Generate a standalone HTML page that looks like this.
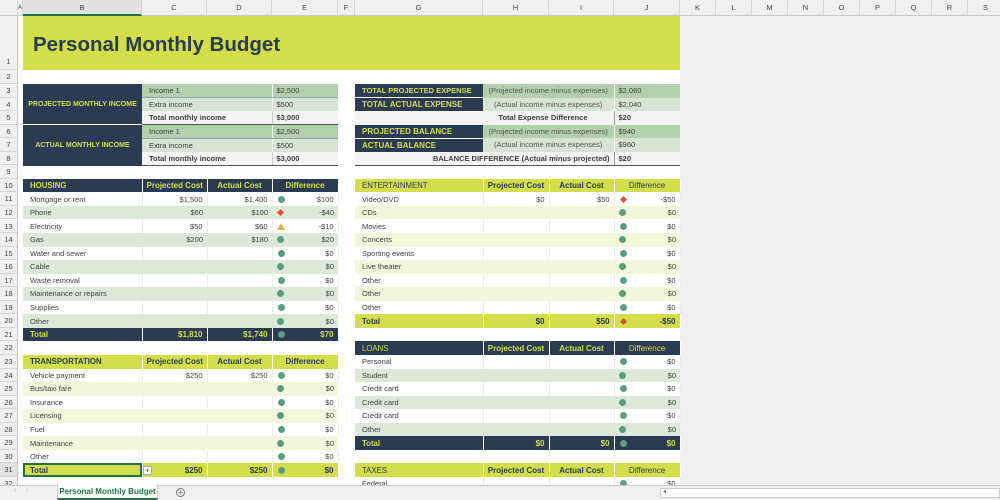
<!DOCTYPE html>
<html><head><meta charset="utf-8"><style>
*{margin:0;padding:0;box-sizing:border-box}
body{width:1000px;height:500px;overflow:hidden;background:#fff;font-family:"Liberation Sans",Arial,sans-serif;font-size:7.5px;color:#404040;position:relative}
.abs{position:absolute}
.colh{position:absolute;top:0;height:16px;background:#f0f0f0;border-right:1px solid #d4d4d4;border-bottom:1px solid #c8c8c8;text-align:center;line-height:16px;font-size:7.5px;color:#444}
.rown{position:absolute;left:0;width:18px;background:#f0f0f0;border-bottom:1px solid #d4d4d4;border-right:1px solid #c8c8c8;text-align:center;font-size:7.5px;color:#444}
table{position:absolute;border-collapse:collapse;table-layout:fixed}
td{height:13.55px;padding:0 4px;white-space:nowrap;overflow:hidden;line-height:13px}
td:first-child{padding-left:7px}
.r{text-align:right}.c{text-align:center}.b{font-weight:bold}
.nv{background:#2b3c52;color:#d3df4a}
.lm{background:#d3df4a;color:#2b3c52}
.hd td{font-weight:bold;font-size:8px;border-right:1px solid #fff}
.hd td:first-child{font-size:7.8px}
.g1{background:#b3cfae}.g2{background:#d5e5d1}.wt{background:#f4f4f4}
.ha{background:#dce9d6}.ta{background:#f2f7dc}
.w td{border-right:1px solid #ececec}
.dot{display:inline-block;width:7px;height:7px;border-radius:50%;background:#5c9d80;float:left;margin-top:3px;margin-left:1px}
.dia{display:inline-block;width:5px;height:5px;background:#d9542b;transform:rotate(45deg);float:left;margin-top:4px;margin-left:2px}
.tri{float:left;margin-top:3px;width:0;height:0;border-left:4px solid transparent;border-right:4px solid transparent;border-bottom:7px solid #e8b04a}
.lbl{text-align:center;font-size:7px;padding:0 2px!important}
</style></head><body>
<div class="abs" style="left:680px;top:16px;width:320px;height:470px;background:#f0f0f0"></div>
<div class="colh" style="left:0;width:18px"></div>
<div class="colh" style="left:18px;width:5px;font-size:6px">A</div>
<div class="colh" style="left:23px;width:119px;background:#e2e2e2;border-bottom:2px solid #217346">B</div>
<div class="colh" style="left:142px;width:65px">C</div>
<div class="colh" style="left:207px;width:65px">D</div>
<div class="colh" style="left:272px;width:66px">E</div>
<div class="colh" style="left:338px;width:17px">F</div>
<div class="colh" style="left:355px;width:128px">G</div>
<div class="colh" style="left:483px;width:66px">H</div>
<div class="colh" style="left:549px;width:65px">I</div>
<div class="colh" style="left:614px;width:66px">J</div>
<div class="colh" style="left:680px;width:36px">K</div>
<div class="colh" style="left:716px;width:36px">L</div>
<div class="colh" style="left:752px;width:36px">M</div>
<div class="colh" style="left:788px;width:36px">N</div>
<div class="colh" style="left:824px;width:36px">O</div>
<div class="colh" style="left:860px;width:36px">P</div>
<div class="colh" style="left:896px;width:36px">Q</div>
<div class="colh" style="left:932px;width:36px">R</div>
<div class="colh" style="left:968px;width:36px">S</div>
<div class="rown" style="top:16px;height:54px;line-height:92px">1</div>
<div class="rown" style="top:70px;height:14px;line-height:14px">2</div>
<div class="rown" style="top:84px;height:13.55px;line-height:13.55px">3</div>
<div class="rown" style="top:97.55px;height:13.55px;line-height:13.55px">4</div>
<div class="rown" style="top:111.1px;height:13.55px;line-height:13.55px">5</div>
<div class="rown" style="top:124.65px;height:13.55px;line-height:13.55px">6</div>
<div class="rown" style="top:138.2px;height:13.55px;line-height:13.55px">7</div>
<div class="rown" style="top:151.75px;height:13.55px;line-height:13.55px">8</div>
<div class="rown" style="top:165.3px;height:13.55px;line-height:13.55px">9</div>
<div class="rown" style="top:178.85px;height:13.55px;line-height:13.55px">10</div>
<div class="rown" style="top:192.4px;height:13.55px;line-height:13.55px">11</div>
<div class="rown" style="top:205.95px;height:13.55px;line-height:13.55px">12</div>
<div class="rown" style="top:219.5px;height:13.55px;line-height:13.55px">13</div>
<div class="rown" style="top:233.05px;height:13.55px;line-height:13.55px">14</div>
<div class="rown" style="top:246.6px;height:13.55px;line-height:13.55px">15</div>
<div class="rown" style="top:260.15px;height:13.55px;line-height:13.55px">16</div>
<div class="rown" style="top:273.7px;height:13.55px;line-height:13.55px">17</div>
<div class="rown" style="top:287.25px;height:13.55px;line-height:13.55px">18</div>
<div class="rown" style="top:300.8px;height:13.55px;line-height:13.55px">19</div>
<div class="rown" style="top:314.35px;height:13.55px;line-height:13.55px">20</div>
<div class="rown" style="top:327.9px;height:13.55px;line-height:13.55px">21</div>
<div class="rown" style="top:341.45px;height:13.55px;line-height:13.55px">22</div>
<div class="rown" style="top:355px;height:13.55px;line-height:13.55px">23</div>
<div class="rown" style="top:368.55px;height:13.55px;line-height:13.55px">24</div>
<div class="rown" style="top:382.1px;height:13.55px;line-height:13.55px">25</div>
<div class="rown" style="top:395.65px;height:13.55px;line-height:13.55px">26</div>
<div class="rown" style="top:409.2px;height:13.55px;line-height:13.55px">27</div>
<div class="rown" style="top:422.75px;height:13.55px;line-height:13.55px">28</div>
<div class="rown" style="top:436.3px;height:13.55px;line-height:13.55px">29</div>
<div class="rown" style="top:449.85px;height:13.55px;line-height:13.55px">30</div>
<div class="rown" style="top:463.4px;height:13.55px;line-height:13.55px;background:#e2e2e2">31</div>
<div class="rown" style="top:476.95px;height:13.55px;line-height:13.55px">32</div>

<div class="abs" style="left:23px;top:16px;width:657px;height:54px;background:#d3df4a"></div>
<div class="abs" style="left:33px;top:33px;font-size:20.5px;font-weight:bold;color:#2b3c52">Personal Monthly Budget</div>

<table style="left:23px;top:84px;width:315px">
<colgroup><col style="width:119px"><col style="width:130px"><col style="width:66px"></colgroup>
<tr><td rowspan="3" class="nv b lbl" style="border-bottom:1px solid #fff">PROJECTED MONTHLY INCOME</td><td class="g1" style="border-bottom:1px solid #8aa;border-right:1px solid #fff;padding-left:7px">Income 1</td><td class="g1" style="border-bottom:1px solid #8aa">$2,500</td></tr>
<tr><td class="g2" style="border-right:1px solid #fff;padding-left:7px">Extra income</td><td class="g2">$500</td></tr>
<tr><td class="wt b" style="border-right:1px solid #ccc;border-bottom:1px solid #555;padding-left:7px">Total monthly income</td><td class="wt b" style="border-bottom:1px solid #555">$3,000</td></tr>
<tr><td rowspan="3" class="nv b lbl">ACTUAL MONTHLY INCOME</td><td class="g1" style="border-bottom:1px solid #8aa;border-right:1px solid #fff;padding-left:7px">Income 1</td><td class="g1" style="border-bottom:1px solid #8aa">$2,500</td></tr>
<tr><td class="g2" style="border-right:1px solid #fff;padding-left:7px">Extra income</td><td class="g2">$500</td></tr>
<tr><td class="wt b" style="border-right:1px solid #ccc;border-bottom:1px solid #555;padding-left:7px">Total monthly income</td><td class="wt b" style="border-bottom:1px solid #555">$3,000</td></tr>
</table>

<table style="left:355px;top:84px;width:325px">
<colgroup><col style="width:128px"><col style="width:131px"><col style="width:66px"></colgroup>
<tr><td class="nv b" style="border-bottom:1px solid #fff">TOTAL PROJECTED EXPENSE</td><td class="g1 c" style="color:#555;border-right:1px solid #fff">(Projected income minus expenses)</td><td class="g1">$2,060</td></tr>
<tr><td class="nv b" style="font-size:8px">TOTAL ACTUAL EXPENSE</td><td class="g2 c" style="color:#555;border-right:1px solid #fff">(Actual income minus expenses)</td><td class="g2">$2,040</td></tr>
<tr><td colspan="2" class="wt b" style="text-align:right;padding-right:26px;border-right:1px solid #999">Total Expense Difference</td><td class="wt b">$20</td></tr>
<tr><td class="nv b" style="font-size:8px;border-bottom:1px solid #fff">PROJECTED BALANCE</td><td class="g1 c" style="color:#555;border-right:1px solid #fff">(Projected income minus expenses)</td><td class="g1">$940</td></tr>
<tr><td class="nv b" style="font-size:8px">ACTUAL BALANCE</td><td class="g2 c" style="color:#555;border-right:1px solid #fff">(Actual income minus expenses)</td><td class="g2">$960</td></tr>
<tr><td colspan="2" class="wt b" style="text-align:right;border-right:1px solid #999;border-bottom:1px solid #555">BALANCE DIFFERENCE (Actual minus projected)</td><td class="wt b" style="border-bottom:1px solid #555">$20</td></tr>
</table>

<table style="left:23px;top:178.85px;width:315px">
<colgroup><col style="width:119px"><col style="width:65px"><col style="width:65px"><col style="width:66px"></colgroup>
<tr class="hd nv"><td>HOUSING</td><td class="c">Projected Cost</td><td class="c">Actual Cost</td><td class="c">Difference</td></tr>
<tr class="w"><td>Mortgage or rent</td><td class="r">$1,500</td><td class="r">$1,400</td><td class="r"><span class="dot"></span>$100</td></tr>
<tr class="ha"><td>Phone</td><td class="r">$60</td><td class="r">$100</td><td class="r"><span class="dia"></span>-$40</td></tr>
<tr class="w"><td>Electricity</td><td class="r">$50</td><td class="r">$60</td><td class="r"><span class="tri"></span>-$10</td></tr>
<tr class="ha"><td>Gas</td><td class="r">$200</td><td class="r">$180</td><td class="r"><span class="dot"></span>$20</td></tr>
<tr class="w"><td>Water and sewer</td><td></td><td></td><td class="r"><span class="dot"></span>$0</td></tr>
<tr class="ha"><td>Cable</td><td></td><td></td><td class="r"><span class="dot"></span>$0</td></tr>
<tr class="w"><td>Waste removal</td><td></td><td></td><td class="r"><span class="dot"></span>$0</td></tr>
<tr class="ha"><td>Maintenance or repairs</td><td></td><td></td><td class="r"><span class="dot"></span>$0</td></tr>
<tr class="w"><td>Supplies</td><td></td><td></td><td class="r"><span class="dot"></span>$0</td></tr>
<tr class="ha"><td>Other</td><td></td><td></td><td class="r"><span class="dot"></span>$0</td></tr>
<tr class="hd nv"><td>Total</td><td class="r">$1,810</td><td class="r">$1,740</td><td class="r"><span class="dot"></span>$70</td></tr>
</table>

<table style="left:355px;top:178.85px;width:325px">
<colgroup><col style="width:128px"><col style="width:66px"><col style="width:65px"><col style="width:66px"></colgroup>
<tr class="hd lm"><td style="font-weight:normal">ENTERTAINMENT</td><td class="c">Projected Cost</td><td class="c">Actual Cost</td><td class="c" style="font-weight:normal">Difference</td></tr>
<tr class="w"><td>Video/DVD</td><td class="r">$0</td><td class="r">$50</td><td class="r"><span class="dia"></span>-$50</td></tr>
<tr class="ta"><td>CDs</td><td></td><td></td><td class="r"><span class="dot"></span>$0</td></tr>
<tr class="w"><td>Movies</td><td></td><td></td><td class="r"><span class="dot"></span>$0</td></tr>
<tr class="ta"><td>Concerts</td><td></td><td></td><td class="r"><span class="dot"></span>$0</td></tr>
<tr class="w"><td>Sporting events</td><td></td><td></td><td class="r"><span class="dot"></span>$0</td></tr>
<tr class="ta"><td>Live theater</td><td></td><td></td><td class="r"><span class="dot"></span>$0</td></tr>
<tr class="w"><td>Other</td><td></td><td></td><td class="r"><span class="dot"></span>$0</td></tr>
<tr class="ta"><td>Other</td><td></td><td></td><td class="r"><span class="dot"></span>$0</td></tr>
<tr class="w"><td>Other</td><td></td><td></td><td class="r"><span class="dot"></span>$0</td></tr>
<tr class="hd lm"><td>Total</td><td class="r">$0</td><td class="r">$50</td><td class="r"><span class="dia"></span>-$50</td></tr>
</table>

<table style="left:23px;top:355px;width:315px">
<colgroup><col style="width:119px"><col style="width:65px"><col style="width:65px"><col style="width:66px"></colgroup>
<tr class="hd lm"><td>TRANSPORTATION</td><td class="c">Projected Cost</td><td class="c">Actual Cost</td><td class="c">Difference</td></tr>
<tr class="w"><td>Vehicle payment</td><td class="r">$250</td><td class="r">$250</td><td class="r"><span class="dot"></span>$0</td></tr>
<tr class="ta"><td>Bus/taxi fare</td><td></td><td></td><td class="r"><span class="dot"></span>$0</td></tr>
<tr class="w"><td>Insurance</td><td></td><td></td><td class="r"><span class="dot"></span>$0</td></tr>
<tr class="ta"><td>Licensing</td><td></td><td></td><td class="r"><span class="dot"></span>$0</td></tr>
<tr class="w"><td>Fuel</td><td></td><td></td><td class="r"><span class="dot"></span>$0</td></tr>
<tr class="ta"><td>Maintenance</td><td></td><td></td><td class="r"><span class="dot"></span>$0</td></tr>
<tr class="w"><td>Other</td><td></td><td></td><td class="r"><span class="dot"></span>$0</td></tr>
<tr class="hd lm"><td style="outline:2px solid #217346;outline-offset:-2px">Total</td><td class="r">$250</td><td class="r">$250</td><td class="r"><span class="dot"></span>$0</td></tr>
</table>
<div class="abs" style="left:143px;top:466px;width:9px;height:9px;background:#fff;border:1px solid #aaa;font-size:5px;text-align:center;line-height:8px;color:#666">▼</div>

<table style="left:355px;top:341.45px;width:325px">
<colgroup><col style="width:128px"><col style="width:66px"><col style="width:65px"><col style="width:66px"></colgroup>
<tr class="hd nv"><td style="font-weight:normal">LOANS</td><td class="c">Projected Cost</td><td class="c">Actual Cost</td><td class="c" style="font-weight:normal">Difference</td></tr>
<tr class="w"><td>Personal</td><td></td><td></td><td class="r"><span class="dot"></span>$0</td></tr>
<tr class="ha"><td>Student</td><td></td><td></td><td class="r"><span class="dot"></span>$0</td></tr>
<tr class="w"><td>Credit card</td><td></td><td></td><td class="r"><span class="dot"></span>$0</td></tr>
<tr class="ha"><td>Credit card</td><td></td><td></td><td class="r"><span class="dot"></span>$0</td></tr>
<tr class="w"><td>Credit card</td><td></td><td></td><td class="r"><span class="dot"></span>$0</td></tr>
<tr class="ha"><td>Other</td><td></td><td></td><td class="r"><span class="dot"></span>$0</td></tr>
<tr class="hd nv"><td>Total</td><td class="r">$0</td><td class="r">$0</td><td class="r"><span class="dot"></span>$0</td></tr>
</table>

<table style="left:355px;top:463.4px;width:325px">
<colgroup><col style="width:128px"><col style="width:66px"><col style="width:65px"><col style="width:66px"></colgroup>
<tr class="hd lm"><td style="font-weight:normal">TAXES</td><td class="c">Projected Cost</td><td class="c">Actual Cost</td><td class="c" style="font-weight:normal">Difference</td></tr>
<tr class="w"><td>Federal</td><td></td><td></td><td class="r"><span class="dot"></span>$0</td></tr>
</table>

<div class="abs" style="left:0;top:485px;width:1000px;height:15px;background:#f0f0f0;border-top:1px solid #c8c8c8"></div>
<div class="abs" style="left:14px;top:487px;font-size:7px;color:#bbb">‹&nbsp;&nbsp;&nbsp;&nbsp;&nbsp;›</div>
<div class="abs" style="left:57px;top:484px;width:101px;height:16px;background:#fff;border-left:1px solid #ccc;border-right:1px solid #ccc;border-bottom:2px solid #217346;text-align:center;line-height:15px;font-size:8px;font-weight:bold;color:#217346">Personal Monthly Budget</div>
<div class="abs" style="left:176px;top:488px;width:9px;height:9px;border:1px solid #777;border-radius:50%;font-size:8px;line-height:7px;text-align:center;color:#555">+</div>
<div class="abs" style="left:660px;top:488px;width:340px;height:10px;background:#fff;border:1px solid #ccc"></div>
<div class="abs" style="left:663px;top:488px;font-size:6px;color:#666">◂</div>
</body></html>
